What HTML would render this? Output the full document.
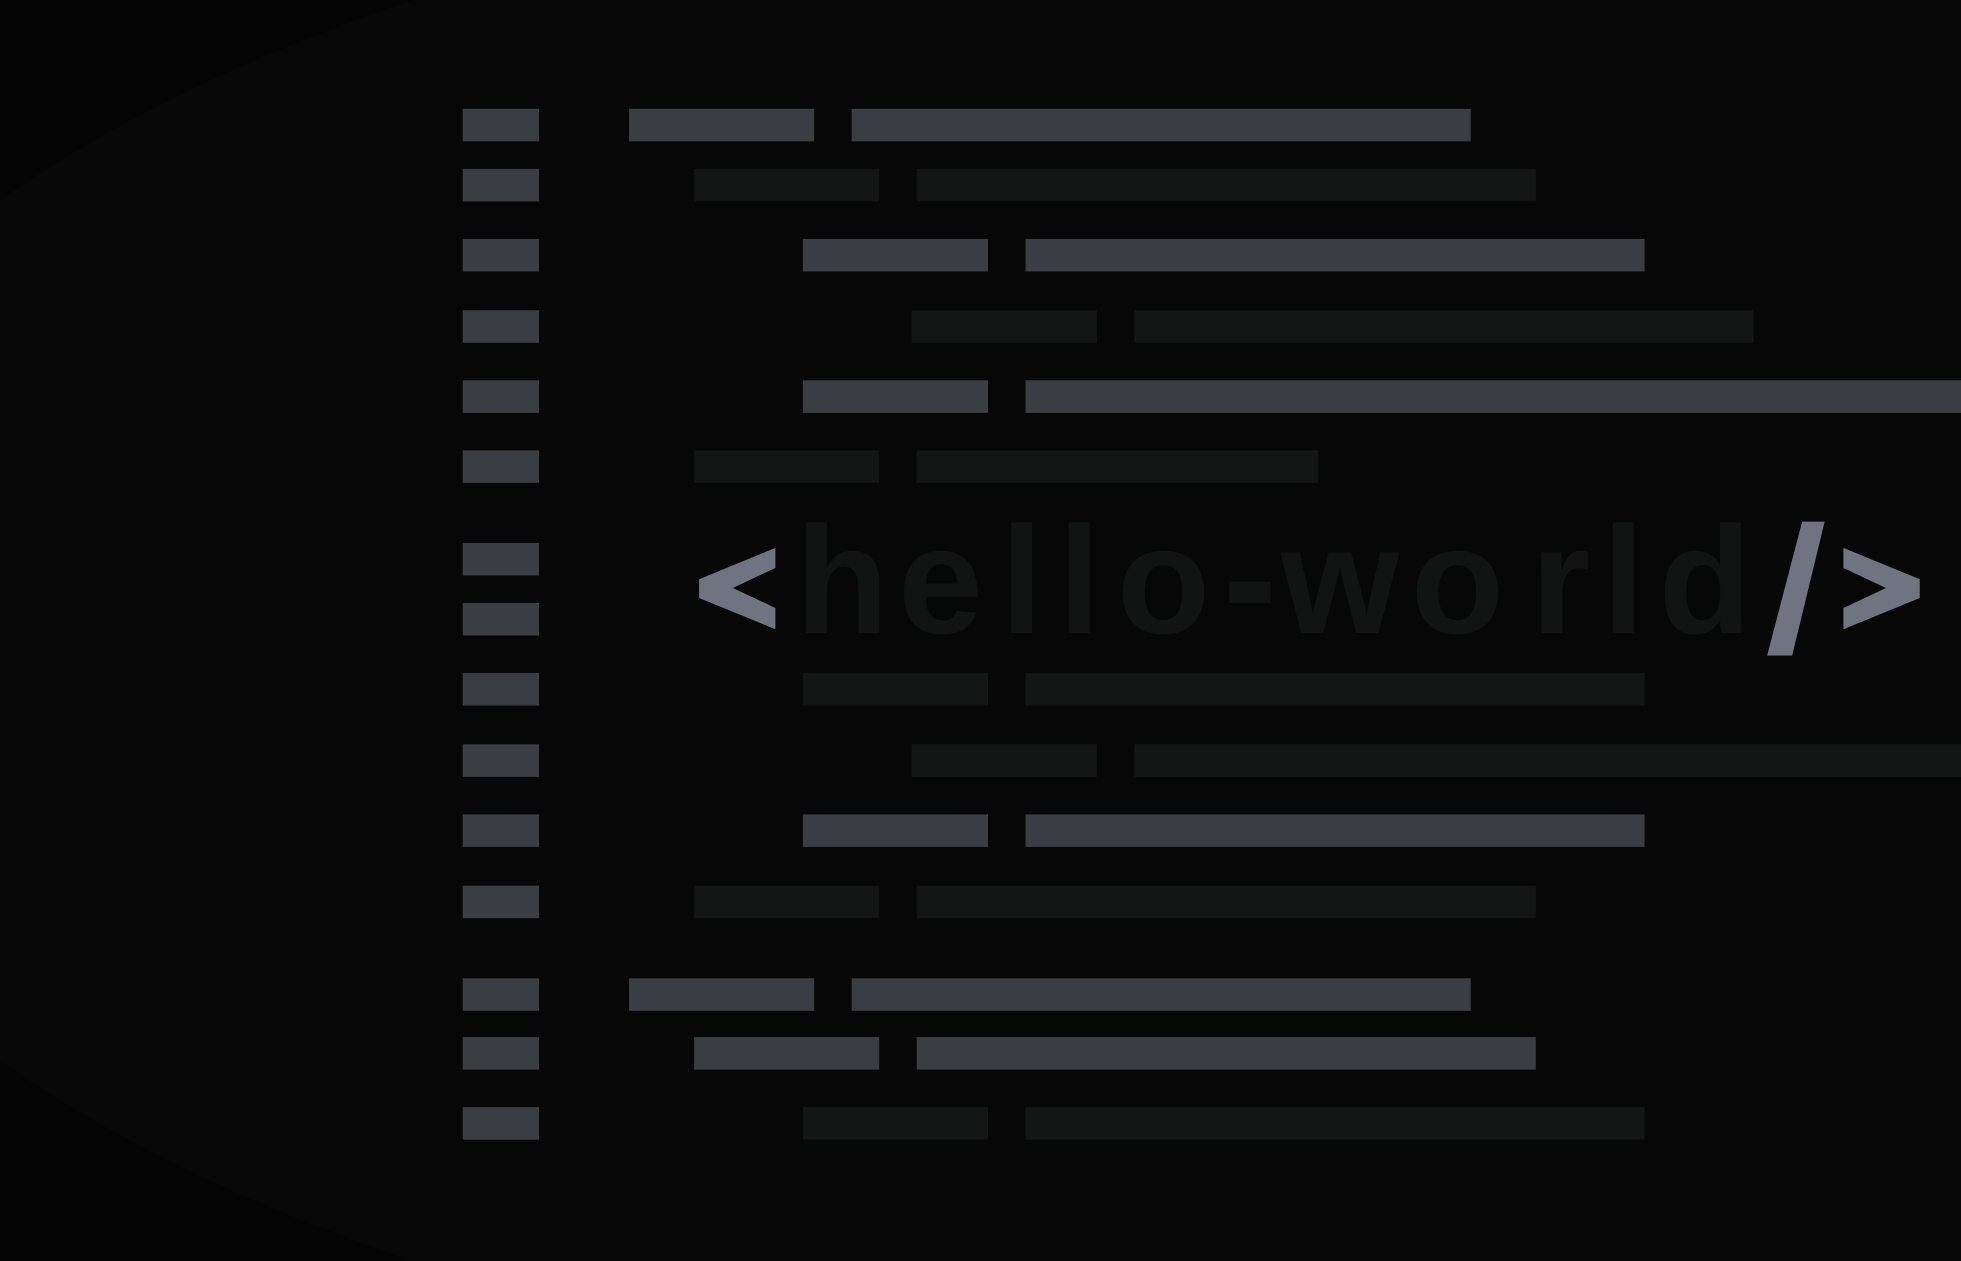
<!DOCTYPE html>
<html><head><meta charset="utf-8"><style>
html,body{margin:0;padding:0;background:#060606;overflow:hidden;width:1961px;height:1261px}
svg{display:block;position:absolute;left:0;top:0}
</style></head><body>
<svg width="1961" height="1261" viewBox="0 0 1568 1008" preserveAspectRatio="none">
<rect width="1568" height="1008" fill="#040404"/>
<ellipse cx="1100" cy="504" rx="1322" ry="620" fill="#070707"/>
<g fill="#3a3d42">
<rect x="370" y="87" width="61" height="26"/><rect x="370" y="135" width="61" height="26"/>
<rect x="370" y="191" width="61" height="26"/><rect x="370" y="248" width="61" height="26"/>
<rect x="370" y="304" width="61" height="26"/><rect x="370" y="360" width="61" height="26"/>
<rect x="370" y="434" width="61" height="26"/><rect x="370" y="482" width="61" height="26"/>
<rect x="370" y="538" width="61" height="26"/><rect x="370" y="595" width="61" height="26"/>
<rect x="370" y="651" width="61" height="26"/><rect x="370" y="708" width="61" height="26"/>
<rect x="370" y="782" width="61" height="26"/><rect x="370" y="829" width="61" height="26"/>
<rect x="370" y="885" width="61" height="26"/>
<rect x="503" y="87" width="148" height="26"/><rect x="681" y="87" width="495" height="26"/>
<rect x="642" y="191" width="148" height="26"/><rect x="820" y="191" width="495" height="26"/>
<rect x="642" y="304" width="148" height="26"/><rect x="820" y="304" width="748" height="26"/>
<rect x="642" y="651" width="148" height="26"/><rect x="820" y="651" width="495" height="26"/>
<rect x="503" y="782" width="148" height="26"/><rect x="681" y="782" width="495" height="26"/>
<rect x="555" y="829" width="148" height="26"/><rect x="733" y="829" width="495" height="26"/>
</g>
<g fill="#141515">
<rect x="555" y="135" width="148" height="26"/><rect x="733" y="135" width="495" height="26"/>
<rect x="729" y="248" width="148" height="26"/><rect x="907" y="248" width="495" height="26"/>
<rect x="555" y="360" width="148" height="26"/><rect x="733" y="360" width="321" height="26"/>
<rect x="642" y="538" width="148" height="26"/><rect x="820" y="538" width="495" height="26"/>
<rect x="729" y="595" width="148" height="26"/><rect x="907" y="595" width="661" height="26"/>
<rect x="555" y="708" width="148" height="26"/><rect x="733" y="708" width="495" height="26"/>
<rect x="642" y="885" width="148" height="26"/><rect x="820" y="885" width="495" height="26"/>
</g>
<g fill="#6f7480">
<polygon points="620,438 620,454 586,470 620,486 620,503 559,478 559,463"/>
<polygon points="1441,417 1459,417 1433,524 1413,524"/>
<polygon points="1474,438 1535,463 1535,478 1474,503 1474,486 1508,470 1474,454"/>
</g>
<g fill="#121313" font-family="Liberation Sans, sans-serif" font-weight="bold" font-size="122">
<text x="636" y="506">h</text>
<text x="718" y="506">e</text>
<text x="800" y="506">l</text>
<text x="846" y="506">l</text>
<text x="893" y="506">o</text>
<rect x="983" y="465" width="33" height="17"/>
<text x="1024" y="506">w</text>
<text x="1128" y="506">o</text>
<text x="1224" y="506">r</text>
<text x="1281" y="506">l</text>
<text x="1326" y="506">d</text>
</g>
</svg>
</body></html>
